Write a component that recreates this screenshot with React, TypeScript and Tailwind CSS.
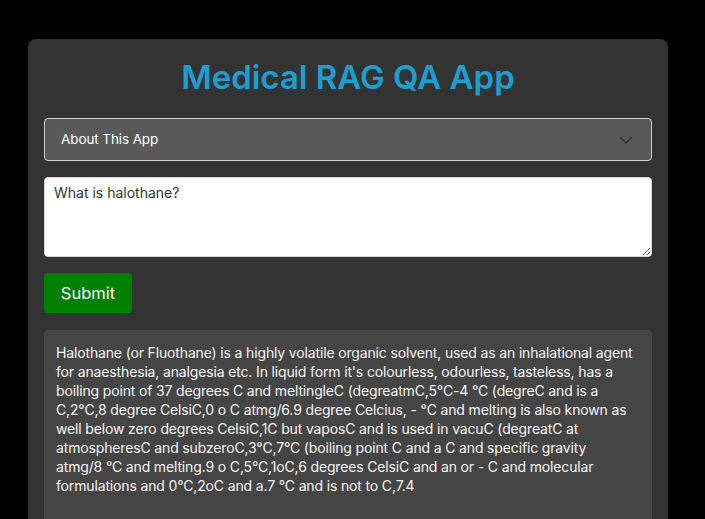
const answerLines = [
  'Halothane (or Fluothane) is a highly volatile organic solvent, used as an inhalational agent',
  "for anaesthesia, analgesia etc. In liquid form it's colourless, odourless, tasteless, has a",
  'boiling point of 37 degrees C and meltingleC (degreatmC,5°C-4 °C (degreC and is a',
  'C,2°C,8 degree CelsiC,0 o C atmg/6.9 degree Celcius, - °C and melting is also known as',
  'well below zero degrees CelsiC,1C but vaposC and is used in vacuC (degreatC at',
  'atmospheresC and subzeroC,3°C,7°C (boiling point C and a C and specific gravity',
  'atmg/8 °C and melting.9 o C,5°C,1oC,6 degrees CelsiC and an or - C and molecular',
  'formulations and 0°C,2oC and a.7 °C and is not to C,7.4',
];

export default function App() {
  return (
    <div className="min-h-[519px] bg-black pt-[39px] font-['Inter',sans-serif]">
      <div className="ml-[28px] w-[640px] rounded-lg bg-[#333333] px-4 pt-[14px]">
        {/* Title */}
        <h1 className="text-center text-[33px] font-semibold leading-[48px] text-[#1b9fd1]">
          Medical RAG QA App
        </h1>

        {/* About expander */}
        <div className="mt-[17px] flex h-[43px] items-center justify-between rounded border border-[#cfcfcf] bg-[#595959] pl-4 pr-[18px]">
          <span className="text-[13.5px] tracking-[-0.1px] text-white">About This App</span>
          <svg width="14" height="8" viewBox="0 0 14 8" fill="none">
            <path d="M1 1l6 6 6-6" stroke="#2e2e2e" strokeWidth="1.2" />
          </svg>
        </div>

        {/* Question */}
        <textarea
          defaultValue="What is halothane?"
          className="mt-4 block h-[80px] w-full resize-y rounded border border-[#d8d8d8] bg-white px-[9px] py-[6px] text-[14px] leading-[18px] text-[#333333] outline-none"
        />

        <button className="mt-4 flex h-[40px] w-[88px] items-center justify-center rounded bg-[#008000] text-[16.5px] text-white">
          Submit
        </button>

        {/* Answer */}
        <div className="mt-[17px] h-[200px] rounded-t bg-[#454545] px-3 pt-[13px] text-[14px] leading-[19px] tracking-[-0.15px] text-[#f5f5f5]">
          {answerLines.map((line) => (
            <div key={line} className="whitespace-nowrap">
              {line}
            </div>
          ))}
        </div>
      </div>
    </div>
  );
}
